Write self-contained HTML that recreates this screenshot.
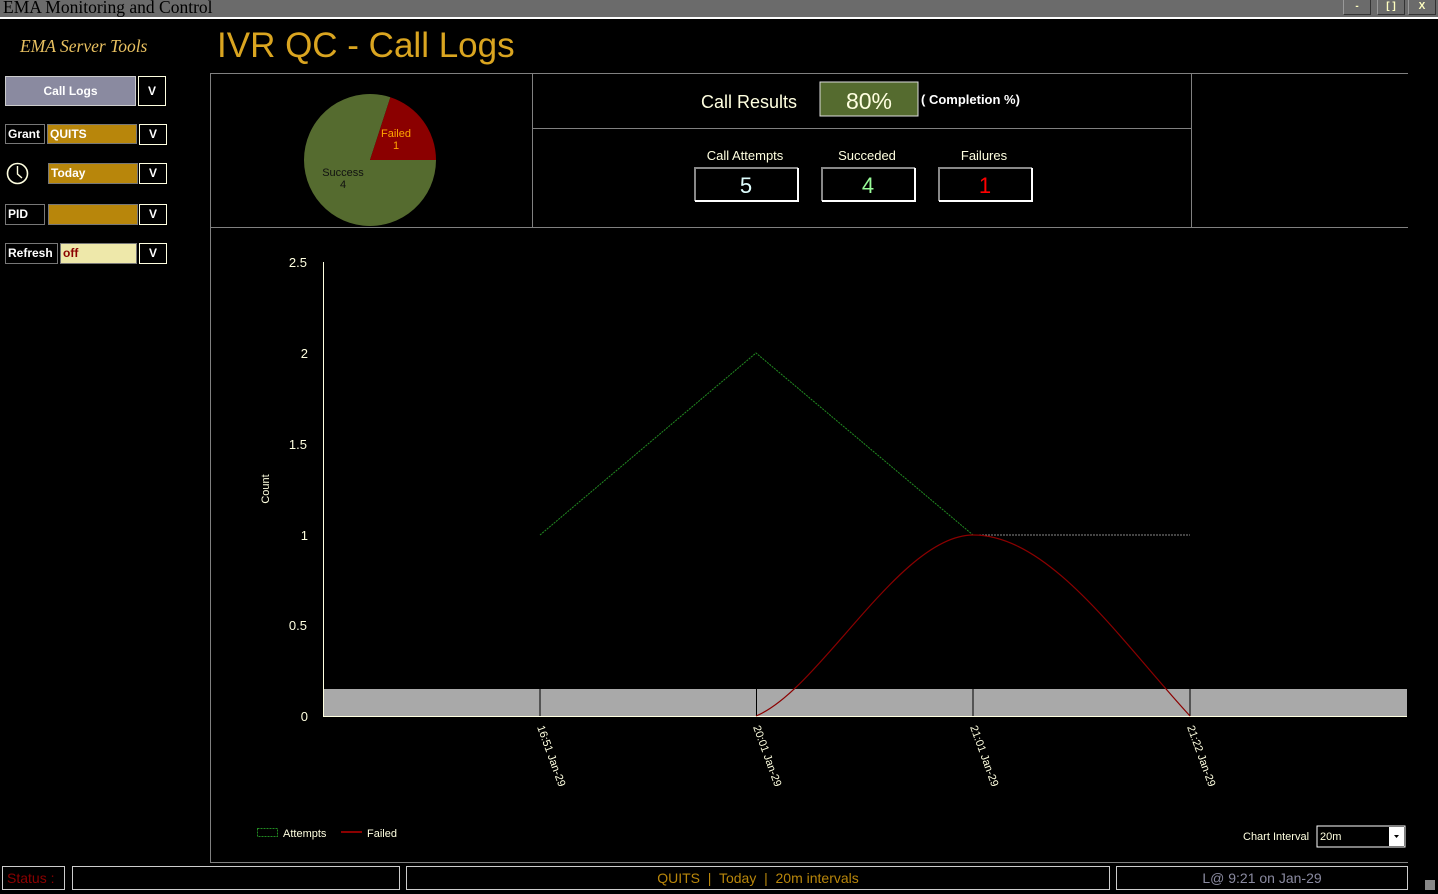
<!DOCTYPE html>
<html><head><meta charset="utf-8"><style>
body{margin:0;width:1438px;height:894px;background:#000;position:relative;overflow:hidden;font-family:"Liberation Sans",sans-serif;color:#ffffe0}
.a{position:absolute}
.tb{left:0;top:0;width:1438px;height:17px;background:#6b6b6b;border-bottom:2px solid #fff}
.tt{left:3px;top:-3px;font-family:"Liberation Serif",serif;font-size:17.5px;color:#000}
.wb{top:0;height:14px;background:#6b6b6b;border-right:1px solid #333;border-bottom:1px solid #333;border-left:1px solid #999;color:#ffffc0;font-size:10px;font-weight:bold;text-align:center;line-height:13px}
.btn{border:1px solid #ffffe0;color:#fff;font-weight:bold;font-size:12px;text-align:center;box-sizing:border-box}
.lbl{border:1px solid #777;color:#fff;font-weight:bold;font-size:12px;box-sizing:border-box;padding-left:2px;line-height:18px}
.gold{background:#b8860b;border:1px solid #777;box-sizing:border-box;color:#fff;font-weight:bold;font-size:12px;padding-left:2px;line-height:18px}
.sb{border:1px solid #ccc;box-sizing:border-box;height:24px;top:866px;font-size:14px;text-align:center;line-height:22px}
</style></head><body>
<div class="a tb"></div>
<div class="a tt">EMA Monitoring and Control</div>
<div class="a wb" style="left:1343px;width:26px">-</div>
<div class="a wb" style="left:1377px;width:26px">[ ]</div>
<div class="a wb" style="left:1408px;width:26px">X</div>

<div class="a" style="left:20px;top:36px;font-family:'Liberation Serif',serif;font-style:italic;font-size:17.5px;color:#e8c060">EMA Server Tools</div>
<div class="a" style="left:217px;top:26px;font-size:35px;color:#daa520">IVR QC - Call Logs</div>

<div class="a" style="left:5px;top:76px;width:131px;height:30px;background:#8a8aa0;border:1px solid #ccc;box-sizing:border-box;color:#fff;font-weight:bold;font-size:12px;text-align:center;line-height:28px">Call Logs</div>
<div class="a btn" style="left:138px;top:76px;width:28px;height:30px;line-height:28px">V</div>

<div class="a lbl" style="left:5px;top:124px;width:40px;height:20px">Grant</div>
<div class="a gold" style="left:47px;top:124px;width:90px;height:20px">QUITS</div>
<div class="a btn" style="left:139px;top:124px;width:28px;height:21px;line-height:19px">V</div>

<svg class="a" style="left:6px;top:162px" width="24" height="24"><circle cx="11.5" cy="11.5" r="10" fill="none" stroke="#ffffe0" stroke-width="1.6"/><path d="M11.5 4V12L16 16" stroke="#ffffe0" stroke-width="1.4" fill="none"/></svg>
<div class="a gold" style="left:48px;top:163px;width:90px;height:21px">Today</div>
<div class="a btn" style="left:139px;top:163px;width:28px;height:21px;line-height:19px">V</div>

<div class="a lbl" style="left:5px;top:204px;width:40px;height:21px">PID</div>
<div class="a gold" style="left:48px;top:204px;width:90px;height:21px"></div>
<div class="a btn" style="left:139px;top:204px;width:28px;height:21px;line-height:19px">V</div>

<div class="a lbl" style="left:5px;top:243px;width:53px;height:21px">Refresh</div>
<div class="a" style="left:60px;top:243px;width:77px;height:21px;background:#eee8aa;border:1px solid #777;box-sizing:border-box;color:#8b0000;font-weight:bold;font-size:12px;padding-left:2px;line-height:19px">off</div>
<div class="a btn" style="left:139px;top:243px;width:28px;height:21px;line-height:19px">V</div>

<svg class="a" style="left:0;top:0" width="1438" height="894">
<g stroke="#808080" stroke-width="1" fill="none">
<line x1="210" y1="73.5" x2="1408" y2="73.5"/>
<line x1="210.5" y1="73" x2="210.5" y2="863"/>
<line x1="532.5" y1="74" x2="532.5" y2="228"/>
<line x1="1191.5" y1="74" x2="1191.5" y2="228"/>
<line x1="533" y1="128.5" x2="1191" y2="128.5"/>
<line x1="210" y1="227.5" x2="1408" y2="227.5"/>
<line x1="210" y1="862.5" x2="1408" y2="862.5"/>
</g>
<path d="M370 160 L436 160 A66 66 0 1 1 390.4 97.2 Z" fill="#556b2f"/>
<path d="M370 160 L390.4 97.2 A66 66 0 0 1 436 160 Z" fill="#8b0000"/>
<text x="396" y="137" fill="#ffa500" font-size="11" text-anchor="middle">Failed</text>
<text x="396" y="149" fill="#ffa500" font-size="11" text-anchor="middle">1</text>
<text x="343" y="176" fill="#111" font-size="11" text-anchor="middle">Success</text>
<text x="343" y="188" fill="#111" font-size="11" text-anchor="middle">4</text>

<rect x="820" y="82" width="98" height="34" fill="#556b2f" stroke="#ddd"/>
<text x="869" y="109" fill="#ffffe0" font-size="23" text-anchor="middle">80%</text>
<text x="749" y="108" fill="#ffffe0" font-size="18" text-anchor="middle">Call Results</text>
<text x="921" y="104" fill="#fff" font-size="13" font-weight="bold">( Completion %)</text>
<text x="745" y="160" fill="#ffffe0" font-size="13" text-anchor="middle">Call Attempts</text>
<text x="867" y="160" fill="#ffffe0" font-size="13" text-anchor="middle">Succeded</text>
<text x="984" y="160" fill="#ffffe0" font-size="13" text-anchor="middle">Failures</text>
<g fill="none" stroke-width="2"><path d="M695 201V168H798" stroke="#888"/><path d="M798 168V201H695" stroke="#fff"/>
<path d="M822 201V168H915" stroke="#888"/><path d="M915 168V201H822" stroke="#fff"/>
<path d="M939 201V168H1032" stroke="#888"/><path d="M1032 168V201H939" stroke="#fff"/></g>
<text x="746" y="193" fill="#e0ffff" font-size="22" text-anchor="middle">5</text>
<text x="868" y="193" fill="#98fb98" font-size="22" text-anchor="middle">4</text>
<text x="985" y="193" fill="#f00" font-size="22" text-anchor="middle">1</text>

<g fill="#ffffe0" font-size="13" text-anchor="end">
<text x="307" y="267">2.5</text><text x="308" y="358">2</text><text x="307" y="449">1.5</text>
<text x="308" y="540">1</text><text x="307" y="630">0.5</text><text x="308" y="721">0</text></g>
<text transform="translate(269 489) rotate(-90)" fill="#ffffe0" font-size="11" text-anchor="middle">Count</text>
<rect x="324" y="689" width="1083" height="27" fill="#a9a9a9"/>
<g stroke="#000" stroke-width="1"><line x1="540" y1="689" x2="540" y2="716"/><line x1="756.5" y1="689" x2="756.5" y2="716"/><line x1="973" y1="689" x2="973" y2="716"/><line x1="1190" y1="689" x2="1190" y2="716"/></g>
<line x1="323.5" y1="262" x2="323.5" y2="717" stroke="#ffffe0"/>
<line x1="323" y1="716.5" x2="1407" y2="716.5" stroke="#ffffe0"/>
<path d="M540 535L756 353L973 535" fill="none" stroke="#228b22" stroke-dasharray="2,1"/>
<path d="M973 535L1190 535" fill="none" stroke="#888" stroke-dasharray="2,1"/>
<path d="M756 716C820 690 900 535 973 535C1050 535 1120 640 1190 716" fill="none" stroke="#8b0000" stroke-width="1.2"/>
<g fill="#ffffe0" font-size="11">
<text transform="translate(537 727) rotate(70)">16:51 Jan-29</text>
<text transform="translate(753 727) rotate(70)">20:01 Jan-29</text>
<text transform="translate(970 727) rotate(70)">21:01 Jan-29</text>
<text transform="translate(1187 727) rotate(70)">21:22 Jan-29</text>
</g>
<rect x="257.5" y="828.5" width="20" height="8" fill="none" stroke="#228b22" stroke-dasharray="2,1"/>
<text x="283" y="837" fill="#ffffe0" font-size="11">Attempts</text>
<line x1="341" y1="832" x2="362" y2="832" stroke="#8b0000" stroke-width="2"/>
<text x="367" y="837" fill="#ffffe0" font-size="11">Failed</text>
<text x="1243" y="840" fill="#ffffe0" font-size="11">Chart Interval</text>
<rect x="1317" y="826" width="88" height="21" fill="#000" stroke="#fff"/>
<rect x="1389" y="827" width="15" height="19" fill="#fff"/>
<path d="M1394 835h5l-2.5 3z" fill="#000"/>
<text x="1320" y="840" fill="#ffffe0" font-size="11">20m</text>
<rect x="1425" y="880" width="10" height="10" fill="#888"/>
</svg>

<div class="a sb" style="left:2px;width:63px;color:#8b0000;text-align:left;padding-left:4px">Status :</div>
<div class="a sb" style="left:72px;width:328px"></div>
<div class="a sb" style="left:406px;width:704px;color:#b8860b">QUITS &nbsp;|&nbsp; Today &nbsp;|&nbsp; 20m intervals</div>
<div class="a sb" style="left:1116px;width:292px;color:#8a8aa0">L@ 9:21 on Jan-29</div>
</body></html>
